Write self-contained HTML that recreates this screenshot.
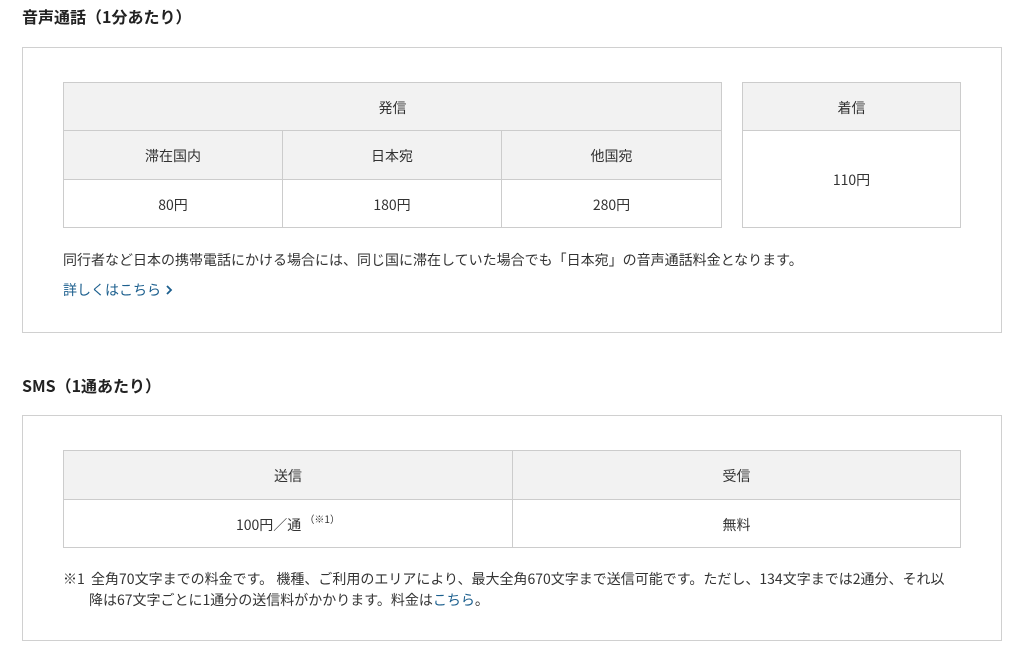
<!DOCTYPE html>
<html><head><meta charset="utf-8"><style>
body{margin:0;width:1027px;height:666px;background:#fff;font-family:"Noto Sans CJK JP","Liberation Sans",sans-serif;color:#333;font-size:14px;position:relative;overflow:hidden}
.a{position:absolute;line-height:20px}
.h{font-weight:bold;font-size:16px;color:#222}
.box{border:1px solid #d0d0d0;box-sizing:border-box}
.c{position:absolute;box-sizing:border-box;border:1px solid #ccc;display:flex;align-items:center;justify-content:center;padding-top:2px}
.g{background:#f2f2f2}
a{color:#1c5f8e;text-decoration:none}
</style></head><body>
<div class="a h" style="left:22px;top:6px">音声通話（1分あたり）</div>
<div class="a box" style="left:22px;top:47px;width:980px;height:286px"></div>
<div class="c g" style="left:63px;top:82px;width:659px;height:49px">発信</div>
<div class="c g" style="left:63px;top:130px;width:220px;height:50px">滞在国内</div>
<div class="c g" style="left:282px;top:130px;width:220px;height:50px">日本宛</div>
<div class="c g" style="left:501px;top:130px;width:221px;height:50px">他国宛</div>
<div class="c" style="left:63px;top:179px;width:220px;height:49px">80円</div>
<div class="c" style="left:282px;top:179px;width:220px;height:49px">180円</div>
<div class="c" style="left:501px;top:179px;width:221px;height:49px">280円</div>
<div class="c g" style="left:742px;top:82px;width:219px;height:49px">着信</div>
<div class="c" style="left:742px;top:130px;width:219px;height:98px">110円</div>
<div class="a" style="left:63px;top:250px">同行者など日本の携帯電話にかける場合には、同じ国に滞在していた場合でも「日本宛」の音声通話料金となります。</div>
<div class="a" style="left:63px;top:280px"><a>詳しくはこちら <svg width="10" height="12" viewBox="0 0 10 12" style="vertical-align:-1px"><path d="M3 2l4 4-4 4" stroke="#1c5f8e" stroke-width="1.8" fill="none"/></svg></a></div>
<div class="a h" style="left:22px;top:375px">SMS（1通あたり）</div>
<div class="a box" style="left:22px;top:415px;width:980px;height:226px"></div>
<div class="c g" style="left:63px;top:450px;width:450px;height:50px">送信</div>
<div class="c g" style="left:512px;top:450px;width:449px;height:50px">受信</div>
<div class="c" style="left:63px;top:499px;width:450px;height:49px">100円／通&nbsp;<span style="font-size:10px;position:relative;top:-6px">（※1）</span></div>
<div class="c" style="left:512px;top:499px;width:449px;height:49px">無料</div>
<div class="a" style="left:63px;top:569px;line-height:21px;width:900px">※1&nbsp; 全角70文字までの料金です。 機種、ご利用のエリアにより、最大全角670文字まで送信可能です。ただし、134文字までは2通分、それ以<br><span style="padding-left:26px">降は67文字ごとに1通分の送信料がかかります。料金は<a>こちら</a>。</span></div>
</body></html>
